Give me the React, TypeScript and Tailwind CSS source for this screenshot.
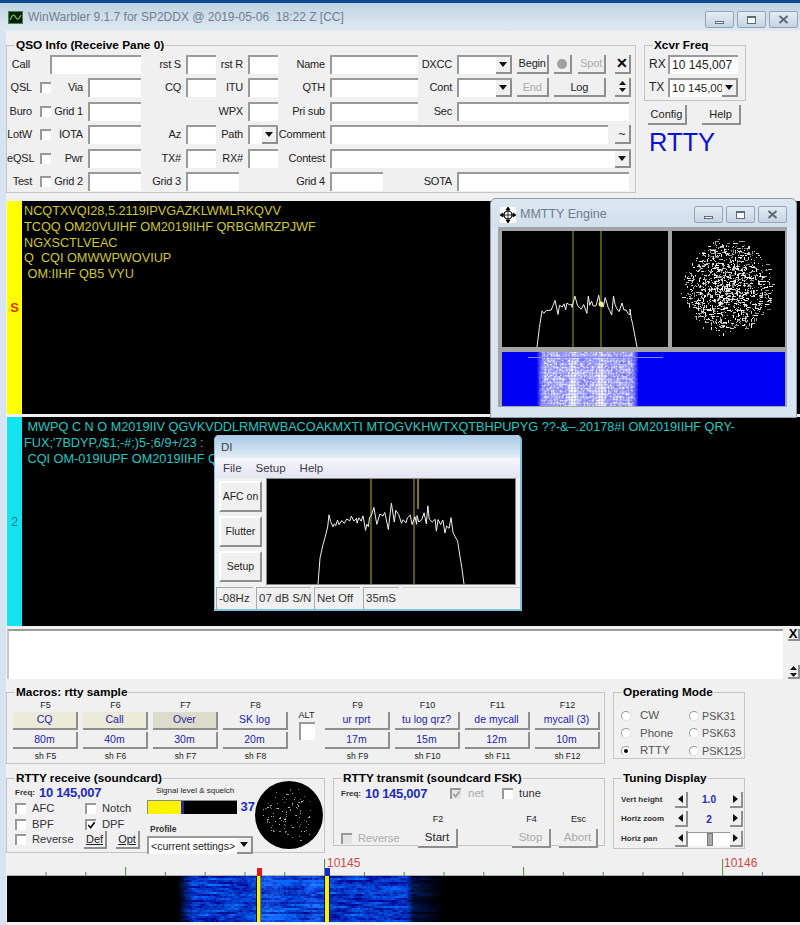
import React from "react";

// seeded random, so that the noise stays the same between runs
const makeRng = (seed: number) => () => {
  seed = (seed + 0x6d2b79f5) | 0;
  let t = Math.imul(seed ^ (seed >>> 15), 1 | seed);
  t = (t + Math.imul(t ^ (t >>> 7), 61 | t)) ^ t;
  return ((t ^ (t >>> 14)) >>> 0) / 4294967296;
};

const trace = (env: number[][], seed: number, noise: number) => {
  const r = makeRng(seed);
  const pts: string[] = [];
  let flip = 1;
  for (let i = 0; i < env.length - 1; i++) {
    const [x0, y0, n0] = env[i];
    const [x1, y1] = env[i + 1];
    let x = x0;
    while (x < x1) {
      const k = (x - x0) / (x1 - x0);
      if (r() > 0.3) flip = -flip;
      const y = y0 + (y1 - y0) * k + (n0 ?? 1) * noise * flip * r() * r() * 1.6;
      pts.push(`${x.toFixed(1)},${y.toFixed(1)}`);
      x += 1.2 + r() * 2;
    }
  }
  const last = env[env.length - 1];
  pts.push(`${last[0]},${last[1]}`);
  return pts.join(" ");
};

const Check = () => (
  <svg viewBox="0 0 10 10" className="w-full h-full">
    <path d="M1.5 4.5 L4 7.5 L8.5 1.5" fill="none" stroke="currentColor" strokeWidth="1.8" />
  </svg>
);

const Cb = ({ on, off }: { on?: boolean; off?: boolean }) => (
  <div
    className={`w-[11px] h-[11px] shrink-0 border-t-2 border-l-2 border-t-[#999] border-l-[#999] ${
      off ? "bg-[#e4e4e4] text-[#999]" : "bg-white text-black"
    }`}
  >
    {on && <Check />}
  </div>
);

const Radio = ({ on }: { on?: boolean }) => (
  <div className="w-[10px] h-[10px] rounded-full bg-white border border-[#9a9a9a] border-r-[#e4e4e4] border-b-[#e4e4e4] flex items-center justify-center">
    {on && <div className="w-[4px] h-[4px] rounded-full bg-black" />}
  </div>
);

const Inp = ({ className = "", children }: { className?: string; children?: React.ReactNode }) => (
  <div
    className={`h-[19px] bg-white border-t-2 border-l-2 border-t-[#9a9a9a] border-l-[#9a9a9a] text-[11.5px] leading-[16px] pl-[2px] whitespace-nowrap overflow-hidden ${className}`}
  >
    {children}
  </div>
);

const Btn = ({
  className = "",
  dim,
  children,
}: {
  className?: string;
  dim?: boolean;
  children?: React.ReactNode;
}) => (
  <div
    className={`flex items-center justify-center bg-[#f0f0f0] border-r-2 border-b-2 border-r-[#8e8e8e] border-b-[#8e8e8e] whitespace-nowrap ${
      dim ? "text-[#aaa]" : "text-[#222]"
    } ${className}`}
  >
    {children}
  </div>
);

const Down = () => (
  <svg viewBox="0 0 8 5" className="w-[8px] h-[5px]">
    <path d="M0 0 H8 L4 5 Z" fill="#111" />
  </svg>
);

const Combo = ({ className = "", children }: { className?: string; children?: React.ReactNode }) => (
  <div className={`relative ${className}`}>
    <Inp className="w-full h-full">{children}</Inp>
    <Btn className="absolute right-0 top-[2px] bottom-0 w-[16px]">
      <Down />
    </Btn>
  </div>
);

const Box = ({
  title,
  className = "",
  children,
}: {
  title: string;
  className?: string;
  children?: React.ReactNode;
}) => (
  <fieldset className={`border border-[#c4c4c4] shrink-0 ${className}`}>
    <legend className="ml-[8px] px-[1px] h-[14px] text-[11.8px] leading-[14px] font-bold text-black whitespace-nowrap">
      {title}
    </legend>
    {children}
  </fieldset>
);

const WinBtns = () => (
  <div className="flex gap-[3px] text-[#5b6b7b]">
    <div className="w-[29px] h-[17px] border border-[#93a5b8] rounded-[2px] bg-gradient-to-b from-[#e4ecf3] to-[#c6d4e1] flex items-end justify-center pb-[3px]">
      <div className="w-[9px] h-[3px] border border-[#5b6b7b] bg-white" />
    </div>
    <div className="w-[29px] h-[17px] border border-[#93a5b8] rounded-[2px] bg-gradient-to-b from-[#e4ecf3] to-[#c6d4e1] flex items-center justify-center">
      <div className="w-[9px] h-[8px] border border-[#5b6b7b] border-t-2 bg-white" />
    </div>
    <div className="w-[29px] h-[17px] border border-[#93a5b8] rounded-[2px] bg-gradient-to-b from-[#e4ecf3] to-[#c6d4e1] flex items-center justify-center">
      <svg viewBox="0 0 11 9" className="w-[11px] h-[9px]">
        <path d="M1.5 1 L9.5 8 M9.5 1 L1.5 8" stroke="#5b6b7b" strokeWidth="2" />
      </svg>
    </div>
  </div>
);

const Lbl = ({ className = "", children }: { className?: string; children?: React.ReactNode }) => (
  <div
    className={`text-right pr-[5px] text-[11px] tracking-[-0.2px] leading-[19px] text-[#222] whitespace-nowrap ${className}`}
  >
    {children}
  </div>
);

const CbCell = () => (
  <div className="h-[19px] flex items-center pl-[3px]">
    <Cb />
  </div>
);

function QsoInfo() {
  return (
    <Box title="QSO Info (Receive Pane 0)" className="w-[630px] h-[155px] mt-[7px]">
      <div className="pt-[3px] grid grid-cols-[30px_16px_35px_53px_45px_30px_32px_30px_52px_88px_39px_55px_119px] grid-rows-[repeat(6,19px)] gap-y-[4.4px]">
        {/* row 1 */}
        <Lbl className="pr-[7px]">Call</Lbl>
        <Inp className="col-span-3 ml-[13px]" />
        <Lbl>rst S</Lbl>
        <Inp />
        <Lbl>rst R</Lbl>
        <Inp />
        <Lbl>Name</Lbl>
        <Inp />
        <Lbl>DXCC</Lbl>
        <Combo />
        <div className="flex text-[11px] tracking-[-0.2px]">
          <Btn className="ml-[5px] w-[33px] h-[19px]">Begin</Btn>
          <Btn className="ml-[5px] w-[18px] h-[19px]">
            <div className="w-[10px] h-[10px] rounded-full bg-[#a0a0a0]" />
          </Btn>
          <Btn dim className="ml-[6px] w-[29px] h-[19px]">
            Spot
          </Btn>
          <Btn className="ml-[9px] w-[16px] h-[19px] text-[14px] font-bold !text-black">✕</Btn>
        </div>
        {/* row 2 */}
        <Lbl className="pr-[3px]">QSL</Lbl>
        <CbCell />
        <Lbl>Via</Lbl>
        <Inp />
        <Lbl>CQ</Lbl>
        <Inp />
        <Lbl>ITU</Lbl>
        <Inp />
        <Lbl>QTH</Lbl>
        <Inp />
        <Lbl>Cont</Lbl>
        <Combo />
        <div className="flex text-[11px] tracking-[-0.2px]">
          <Btn dim className="ml-[5px] w-[33px] h-[19px]">
            End
          </Btn>
          <Btn className="ml-[5px] w-[53px] h-[19px]">Log</Btn>
          <Btn className="ml-[9px] w-[16px] h-[19px]">
            <svg viewBox="0 0 7 11" className="w-[7px] h-[11px]">
              <path d="M3.5 0 L7 4 H0 Z M3.5 11 L0 7 H7 Z" fill="#111" />
            </svg>
          </Btn>
        </div>
        {/* row 3 */}
        <Lbl className="pr-[3px]">Buro</Lbl>
        <CbCell />
        <Lbl>Grid 1</Lbl>
        <Inp />
        <div className="col-span-2" />
        <Lbl>WPX</Lbl>
        <Inp />
        <Lbl>Pri sub</Lbl>
        <Inp />
        <Lbl>Sec</Lbl>
        <Inp className="col-span-2 mr-[2px]" />
        {/* row 4 */}
        <Lbl className="pr-[3px]">LotW</Lbl>
        <CbCell />
        <Lbl>IOTA</Lbl>
        <Inp />
        <Lbl>Az</Lbl>
        <Inp />
        <Lbl>Path</Lbl>
        <Combo />
        <Lbl>Comment</Lbl>
        <div className="col-span-4 flex">
          <Inp className="w-[278px]" />
          <Btn className="ml-[7px] w-[16px] h-[19px] text-[12px]">~</Btn>
        </div>
        {/* row 5 */}
        <Lbl className="pr-[3px]">eQSL</Lbl>
        <CbCell />
        <Lbl>Pwr</Lbl>
        <Inp />
        <Lbl>TX#</Lbl>
        <Inp />
        <Lbl>RX#</Lbl>
        <Inp />
        <Lbl>Contest</Lbl>
        <Combo className="col-span-4 w-[301px]" />
        {/* row 6 */}
        <Lbl className="pr-[3px]">Test</Lbl>
        <CbCell />
        <Lbl>Grid 2</Lbl>
        <Inp />
        <Lbl>Grid 3</Lbl>
        <Inp className="col-span-2 w-[53px]" />
        <div />
        <Lbl>Grid 4</Lbl>
        <Inp className="w-[53px]" />
        <Lbl>SOTA</Lbl>
        <Inp className="col-span-2 mr-[2px]" />
      </div>
    </Box>
  );
}

function XcvrColumn() {
  return (
    <div className="ml-[8px] w-[102px]">
      <Box title="Xcvr Freq" className="w-[102px] h-[63px] mt-[7px]">
        <div className="pt-[3px] pl-[4px] grid grid-cols-[19px_70px] gap-y-[4px] text-[12px] text-[#222]">
          <div className="leading-[19px]">RX</div>
          <Inp className="text-[12px]">10 145,007</Inp>
          <div className="leading-[19px]">TX</div>
          <Combo className="h-[19px]">10 145,007</Combo>
        </div>
      </Box>
      <div className="mt-[4px] ml-[4px] flex gap-[15px] text-[11px]">
        <Btn className="w-[39px] h-[20px]">Config</Btn>
        <Btn className="w-[39px] h-[20px]">Help</Btn>
      </div>
      <div className="ml-[5px] mt-[3px] text-[25.5px] leading-[28px] text-[#0c12d0]">RTTY</div>
    </div>
  );
}

const SPANE = [
  "NCQTXVQI28,5.2119IPVGAZKLWMLRKQVV",
  "TCQQ OM20VUIHF OM2019IIHF QRBGMRZPJWF",
  "NGXSCTLVEAC",
  "Q  CQI OMWWPWOVIUP",
  " OM:IIHF QB5 VYU",
];
const RPANE = [
  " MWPQ C N O M2019IIV QGVKVDDLRMRWBACOAKMXTI MTOGVKHWTXQTBHPUPYG ??-&–.20178#I OM2019IIHF QRY-",
  "FUX;'7BDYP,/$1;-#;)5-;6/9+/23 :",
  " CQI OM-019IUPF OM2019IIHF Q'",
];

const Pane = ({
  lines,
  mark,
  stripe,
  markCls,
  text,
  className,
}: {
  lines: string[];
  mark: string;
  stripe: string;
  markCls: string;
  text: string;
  className: string;
}) => (
  <div className={`ml-px flex bg-black ${className}`}>
    <div className={`w-[15px] flex items-center justify-center ${stripe}`}>
      <span className={`text-[13px] font-bold ${markCls}`}>{mark}</span>
    </div>
    <div className={`pl-[2px] pt-[3px] text-[12.7px] leading-[15.8px] whitespace-pre ${text}`}>
      {lines.map((l, i) => (
        <div key={i}>{l}</div>
      ))}
    </div>
  </div>
);

function Constellation({ w, h, cx, cy, rx, ry, n, color, seed, len }: any) {
  const r = makeRng(seed);
  const dots = [];
  for (let i = 0; i < n; i++) {
    const a = r() * Math.PI * 2;
    const d = Math.pow(r(), 0.6) * (0.82 + r() * 0.26);
    const x = Math.round(cx + Math.cos(a) * d * rx);
    const y = Math.round(cy + Math.sin(a) * d * ry);
    const l = r() < 0.55 ? 1 : Math.round(len * (0.5 + r()));
    const tall = r() < 0.35;
    dots.push(
      <rect
        key={i}
        x={x}
        y={y}
        width={tall ? 1 : l}
        height={tall ? l : 1}
        fill={color}
        opacity={0.45 + r() * 0.55}
      />
    );
  }
  return (
    <svg width={w} height={h} className="block">
      {dots}
    </svg>
  );
}

function MmttyWaterfall() {
  const r = makeRng(11);
  const cells = [];
  for (let y = 0; y < 54; y += 1.5) {
    for (let x = 34; x < 136; x += 1.5) {
      const edge = Math.min(1, Math.max(0, Math.min(x - 34, 136 - x)) / 7);
      const low = 0.35 + (y / 54) * 0.65;
      const hot =
        (Math.max(0, 1 - Math.abs(x - 70) / 6) + Math.max(0, 1 - Math.abs(x - 98) / 6)) * low * 0.5;
      const o = Math.min(1, (0.45 + r() * 0.5 + hot) * edge);
      cells.push(<rect key={`${x}-${y}`} x={x} y={y} width={1.6} height={1.6} fill="#fff" opacity={o} />);
    }
  }
  return (
    <svg width={283} height={54} className="block bg-[#0000f4]">
      {cells}
      <rect x={26} y={5} width={135} height={1} fill="#8088ff" />
    </svg>
  );
}

function MmttyEngine() {
  return (
    <div className="absolute left-[490px] top-[198px] w-[307px] h-[220px] bg-[#d8e5f1] rounded-t-[6px] border border-[#8e9cab] px-[7px]">
      <div className="h-[28px] pt-[3px] flex items-center bg-gradient-to-b from-[#dce7f1] to-[#d2e0ed] -mx-[7px] px-[9px] rounded-t-[6px]">
        <svg viewBox="0 0 16 16" className="w-[16px] h-[16px] bg-white shrink-0">
          <circle cx="8" cy="8" r="4" fill="none" stroke="#000" strokeWidth="1.2" />
          <path
            d="M8 1 V15 M1 8 H15 M8 0 L6 3 H10 Z M8 16 L6 13 H10 Z M0 8 L3 6 V10 Z M16 8 L13 6 V10 Z"
            stroke="#000"
            fill="#000"
            strokeWidth="0.8"
          />
        </svg>
        <span className="ml-[4px] text-[12.5px] text-[#6d7d8c]">MMTTY Engine</span>
        <div className="ml-auto">
          <WinBtns />
        </div>
      </div>
      <div className="bg-[#a4a4a4] pl-[4px] pr-[2px] pt-[4px] h-[180px] w-[289px] flex flex-col gap-[5px]">
        <div className="flex gap-[4px] h-[116px] shrink-0">
          <div className="w-[166px] bg-black">
            <svg width={166} height={116} className="block">
              <line x1={71} y1={0} x2={71} y2={116} stroke="#a4a422" />
              <line x1={99} y1={0} x2={99} y2={116} stroke="#a4a422" />
              <polyline
                fill="none"
                stroke="#f0f0f0"
                strokeWidth={1}
                points={trace(
                  [
                    [35, 116, 0],
                    [38, 92, 0.2],
                    [40, 80, 0.8],
                    [70, 74, 1],
                    [95, 74, 1],
                    [128, 80, 0.6],
                    [131, 95, 0],
                    [135, 116, 0],
                  ],
                  5,
                  10
                )}
              />
              <circle cx={99} cy={73} r={2.5} fill="#f0f08a" />
            </svg>
          </div>
          <div className="w-[113px] bg-black">
            <Constellation w={113} h={116} cx={55} cy={56} rx={44} ry={46} n={1300} color="#fff" seed={3} len={3} />
          </div>
        </div>
        <MmttyWaterfall />
      </div>
    </div>
  );
}

function DiWindow() {
  const r = ["-08Hz", "07 dB S/N", "Net Off", "35mS"];
  const w = ["w-[37px]", "w-[55px]", "w-[46px]", "w-[36px]"];
  return (
    <div className="absolute left-[214px] top-[435px] w-[308px] h-[176px] bg-[#f0f0f0] rounded-t-[5px] border-r-2 border-b-2 border-l border-[#7fc4d8] flex flex-col text-[11.5px] text-[#333]">
      <div className="h-[23px] shrink-0 pl-[6px] leading-[24px] rounded-t-[5px] bg-gradient-to-b from-[#a9c9e6] to-[#e2ecf5] text-[#444]">
        DI
      </div>
      <div className="h-[20px] shrink-0 flex gap-[14px] pl-[8px] leading-[20px] bg-gradient-to-b from-[#f6f6fb] to-[#e4e4f2] text-[#3a3a4a]">
        <span>File</span>
        <span>Setup</span>
        <span>Help</span>
      </div>
      <div className="flex h-[107px] shrink-0 pl-[4px]">
        <div className="w-[43px] pt-[3px] flex flex-col gap-[4px] text-[10.5px]">
          <Btn className="h-[31px] border-t-2 border-l-2 border-t-white border-l-white">AFC on</Btn>
          <Btn className="h-[31px] border-t-2 border-l-2 border-t-white border-l-white">Flutter</Btn>
          <Btn className="h-[31px] border-t-2 border-l-2 border-t-white border-l-white">Setup</Btn>
        </div>
        <div className="ml-[4px] w-[250px] bg-black border border-[#888]">
          <svg width={248} height={105} className="block">
            <line x1={104} y1={0} x2={104} y2={105} stroke="#b4b42a" />
            <line x1={147} y1={0} x2={147} y2={105} stroke="#b4b42a" />
            <line x1={151} y1={0} x2={151} y2={30} stroke="#a8a420" strokeWidth={1.5} />
            <polyline
              fill="none"
              stroke="#f0f0f0"
              strokeWidth={1}
              points={trace(
                [
                  [51, 105, 0],
                  [53, 80, 0.3],
                  [58, 60, 0.3],
                  [62, 40, 0.6],
                  [66, 46, 0.4],
                  [90, 40, 0.9],
                  [120, 36, 1],
                  [150, 38, 1],
                  [178, 46, 0.7],
                  [186, 52, 0.2],
                  [191, 65, 0.1],
                  [195, 90, 0],
                  [197, 105, 0],
                ],
                9,
                11
              )}
            />
          </svg>
        </div>
      </div>
      <div className="flex flex-1 items-stretch pl-[1px] pt-[2px] gap-[3px]">
        {r.map((t, i) => (
          <div key={t} className={`${w[i]} border-t border-l border-[#aaa] leading-[20px] pl-[2px] whitespace-nowrap`}>
            {t}
          </div>
        ))}
        <div className="flex-1 border-t border-[#ccc]" />
      </div>
    </div>
  );
}

const FKeys = [
  { f: "F5", top: "CQ", bot: "80m", sh: "sh F5", bg: "!bg-[#ecead8]" },
  { f: "F6", top: "Call", bot: "40m", sh: "sh F6", bg: "!bg-[#ecead8]" },
  { f: "F7", top: "Over", bot: "30m", sh: "sh F7", bg: "!bg-[#dddccb]" },
  { f: "F8", top: "SK log", bot: "20m", sh: "sh F8", bg: "" },
  { f: "F9", top: "ur rprt", bot: "17m", sh: "sh F9", bg: "" },
  { f: "F10", top: "tu log qrz?", bot: "15m", sh: "sh F10", bg: "" },
  { f: "F11", top: "de mycall", bot: "12m", sh: "sh F11", bg: "" },
  { f: "F12", top: "mycall (3)", bot: "10m", sh: "sh F12", bg: "" },
];

const MacroCol = ({ k }: { k: (typeof FKeys)[number] }) => (
  <div className="w-[65px] flex flex-col items-stretch">
    <div className="h-[13px] text-center text-[9px] leading-[13px] text-[#222]">{k.f}</div>
    <Btn className={`h-[18px] text-[10.5px] !text-[#1c1cb0] ${k.bg}`}>{k.top}</Btn>
    <Btn className="mt-[2px] h-[17px] text-[10.5px] !text-[#1c1cb0]">{k.bot}</Btn>
    <div className="mt-[1px] h-[12px] text-center text-[8.5px] leading-[12px] text-[#222]">{k.sh}</div>
  </div>
);

function Macros() {
  return (
    <Box title="Macros: rtty sample" className="w-[599px] h-[79px]">
      <div className="flex gap-[5px] pl-[6px]">
        {FKeys.slice(0, 4).map((k) => (
          <MacroCol key={k.f} k={k} />
        ))}
        <div className="w-[27px] flex flex-col items-center pt-[11px]">
          <div className="text-[9px] leading-[11px] text-[#222]">ALT</div>
          <div className="mt-[1px] w-[16px] h-[18px] bg-white border-t-2 border-l-2 border-t-[#999] border-l-[#999]" />
        </div>
        {FKeys.slice(4).map((k) => (
          <MacroCol key={k.f} k={k} />
        ))}
      </div>
    </Box>
  );
}

function OpMode() {
  const modes = [
    ["CW", "PSK31"],
    ["Phone", "PSK63"],
    ["RTTY", "PSK125"],
  ];
  return (
    <Box title="Operating Mode" className="w-[132px] h-[74px]">
      <div className="pl-[7px] pt-[8px] grid grid-cols-[68px_1fr] auto-rows-[17.5px] text-[11.5px] text-[#555]">
        {modes.flat().map((m) => (
          <div key={m} className="flex items-center">
            <Radio on={m === "RTTY"} />
            <span className={m.startsWith("PSK") ? "ml-[3px] text-[10.8px]" : "ml-[9px]"}>{m}</span>
          </div>
        ))}
      </div>
    </Box>
  );
}

const FreqRow = () => (
  <div className="h-[15px] flex items-center">
    <span className="text-[8px] font-bold text-[#333]">Freq:</span>
    <span className="ml-[4px] text-[13px] font-bold tracking-[-0.3px] text-[#1c2cb8]">10 145,007</span>
  </div>
);

const CheckLbl = ({ label, on }: { label: string; on?: boolean }) => (
  <div className="flex items-center text-[11.2px] text-[#333]">
    <Cb on={on} />
    <span className="ml-[6px]">{label}</span>
  </div>
);

function RttyReceive() {
  return (
    <Box title="RTTY receive (soundcard)" className="w-[319px] h-[82px]">
      <div className="flex pl-[8px]">
        <div className="w-[132px]">
          <FreqRow />
          <div className="mt-[1px] grid grid-cols-[70px_1fr] auto-rows-[15.5px] items-center">
            <CheckLbl label="AFC" />
            <CheckLbl label="Notch" />
            <CheckLbl label="BPF" />
            <CheckLbl label="DPF" on />
            <CheckLbl label="Reverse" />
            <div className="-ml-px flex gap-[9px] text-[11px] h-[18px]">
              <Btn className="w-[23px] h-[18px] underline">Def</Btn>
              <Btn className="w-[24px] h-[18px] underline">Opt</Btn>
            </div>
          </div>
        </div>
        <div className="w-[108px] relative z-10">
          <div className="pl-[9px] h-[12px] text-[8px] leading-[11px] text-[#222] whitespace-nowrap">
            Signal level &amp; squelch
          </div>
          <div className="flex items-center">
            <div className="w-[91px] h-[14px] flex bg-black border-t border-l border-[#8a8a8a]">
              <div className="w-[33px] bg-[#fff200]" />
              <div className="w-[3px] bg-[#1c2cb8]" />
            </div>
            <span className="ml-[4px] text-[13px] font-bold text-[#1c2cb8]">37</span>
          </div>
          <div className="mt-[6px] pl-[3px] h-[12px] text-[8.5px] font-bold leading-[12px] text-[#333]">Profile</div>
          <Combo className="mt-[1px] w-[106px] h-[18px]">
            <span className="text-[#222] text-[10.5px]">&lt;current settings&gt;</span>
          </Combo>
        </div>
        <div className="-mt-[4px] shrink-0 w-[68px] h-[68px] rounded-full bg-black overflow-hidden">
          <Constellation w={68} h={68} cx={34} cy={34} rx={28} ry={28} n={110} color="#c8c8c8" seed={21} len={1.2} />
        </div>
      </div>
    </Box>
  );
}

function RttyTransmit() {
  return (
    <Box title="RTTY transmit (soundcard FSK)" className="w-[272px] h-[75px] ml-[8px]">
      <div className="pl-[7px]">
        <div className="flex items-center">
          <FreqRow />
          <div className="ml-[23px]">
            <div className="flex items-center text-[11.5px] text-[#aaa]">
              <Cb on off />
              <span className="ml-[7px]">net</span>
            </div>
          </div>
          <div className="ml-[18px]">
            <CheckLbl label="tune" />
          </div>
        </div>
        <div className="mt-[11px] grid grid-cols-[77px_40px_54px_39px_8px_39px] items-center">
          <div />
          <div className="text-center text-[9px] leading-[12px] text-[#222]">F2</div>
          <div />
          <div className="text-center text-[9px] leading-[12px] text-[#222]">F4</div>
          <div />
          <div className="text-center text-[9px] leading-[12px] text-[#222]">Esc</div>
          <div className="mt-[4px] flex items-center text-[11.2px] text-[#aaa]">
            <Cb off />
            <span className="ml-[6px]">Reverse</span>
          </div>
          <Btn className="mt-[4px] h-[19px] text-[11.5px]">Start</Btn>
          <div />
          <Btn dim className="mt-[4px] h-[19px] text-[11.5px]">
            Stop
          </Btn>
          <div />
          <Btn dim className="mt-[4px] h-[19px] text-[11.5px]">
            Abort
          </Btn>
        </div>
      </div>
    </Box>
  );
}

const Arrow = ({ right }: { right?: boolean }) => (
  <Btn className="w-[13px] h-[16px]">
    <svg viewBox="0 0 5 8" className="w-[5px] h-[8px]">
      <path d={right ? "M0 0 L5 4 L0 8 Z" : "M5 0 L0 4 L5 8 Z"} fill="#111" />
    </svg>
  </Btn>
);

function Tuning() {
  return (
    <Box title="Tuning Display" className="w-[132px] h-[78px]">
      <div className="pl-[7px] pt-[5px] grid grid-cols-[54px_13px_42px_13px] auto-rows-[19.5px] items-center text-[8px] font-bold text-[#333]">
        <div>Vert height</div>
        <Arrow />
        <div className="text-center text-[10px] text-[#1c2cb8]">1.0</div>
        <Arrow right />
        <div>Horiz zoom</div>
        <Arrow />
        <div className="text-center text-[10px] text-[#1c2cb8]">2</div>
        <Arrow right />
        <div>Horiz pan</div>
        <Arrow />
        <div className="h-[14px] bg-white border-t border-[#999] flex items-stretch pl-[19px]">
          <div className="w-[6px] bg-[#aaa] border border-[#777]" />
        </div>
        <Arrow right />
      </div>
    </Box>
  );
}

function Ruler() {
  const ticks = [];
  for (let i = 0; i < 20; i++) {
    const x = 39 + i * 39.8;
    const big = i === 7 || i === 17;
    const mid = i === 2 || i === 12;
    ticks.push(
      <line key={i} x1={x} x2={x} y1={big ? 4 : mid ? 12 : 17} y2={21} stroke="#4d8a4d" strokeWidth={1} />
    );
  }
  return (
    <svg width={793} height={21} className="block ml-px">
      <line x1={0} x2={793} y1={20.5} y2={20.5} stroke="#b0b0b0" />
      {ticks}
      <rect x={250} y={13} width={5} height={8} fill="#e01818" />
      <rect x={318} y={13} width={5} height={8} fill="#1828d0" />
      <text x={320} y={12} fontSize={12} fill="#d04848">
        10145
      </text>
      <text x={717} y={12} fontSize={12} fill="#d04848">
        10146
      </text>
    </svg>
  );
}

function Waterfall() {
  const r = makeRng(77);
  const cells = [];
  for (let y = 0; y < 46; y += 2) {
    const row = 0.75 + r() * 0.4;
    let w = r();
    for (let x = 165; x < 436; x += 2) {
      w = 0.8 * w + 0.2 * r();
      const inBand = Math.min(1, Math.max(0, x - 170) / 16) * Math.min(1, Math.max(0, 408 - x) / 10);
      const tail = x > 400 ? (Math.max(0, (436 - x) / 36) * 0.45 * (row - 0.6)) / 0.5 : 0;
      const hot =
        Math.max(0, 1 - Math.abs(x - 262) / 22) * 0.7 + Math.max(0, 1 - Math.abs(x - 306) / 20) * 0.6;
      const v = Math.max(inBand * row, tail);
      const n = Math.max(0, Math.min(1, (w - 0.32) * 2.6 + hot * 0.45));
      const R = Math.round((4 + hot * 36 * n) * v);
      const G = Math.round((8 + 105 * n) * v);
      const B = Math.round((150 + 105 * n) * Math.min(1, v * 1.15));
      cells.push(<rect key={`${x}-${y}`} x={x} y={y} width={2.4} height={2.4} fill={`rgb(${R},${G},${B})`} />);
    }
  }
  return (
    <div className="ml-px h-[46px] bg-black overflow-hidden">
      <svg width={793} height={46} className="block">
        <g className="blur-[0.5px]">{cells}</g>
        <rect x={249} y={0} width={5} height={46} fill="#161606" />
        <rect x={250} y={0} width={3.5} height={46} fill="#f2ee20" />
        <rect x={317} y={0} width={6} height={46} fill="#161606" />
        <rect x={318} y={0} width={4} height={46} fill="#f2ee20" />
      </svg>
    </div>
  );
}

export default function App() {
  return (
    <div className="relative w-[800px] h-[925px] overflow-hidden bg-[#f0f0f0] font-['Liberation_Sans',Arial,sans-serif]">
      {/* title bar */}
      <div className="h-[31px] border-t-[3px] border-t-[#104c92] bg-gradient-to-b from-[#bfd2e3] to-[#e0e9f1] flex items-center pl-[8px] pr-[2px]">
        <svg viewBox="0 0 15 13" className="w-[15px] h-[13px] shrink-0">
          <rect x="0.5" y="0.5" width="14" height="12" fill="#0c1a0c" stroke="#3c8a3c" />
          <path d="M2 9 Q5 1 7.5 6 T13 4" fill="none" stroke="#5fd05f" strokeWidth="1.2" />
        </svg>
        <span className="ml-[5px] text-[12px] text-[#6f7f8e] whitespace-pre">
          WinWarbler 9.1.7 for SP2DDX @ 2019-05-06  18:22 Z [CC]
        </span>
        <div className="ml-auto mt-[5px]">
          <WinBtns />
        </div>
      </div>

      <div className="flex">
        <div className="w-[6px] h-[894px] shrink-0 bg-[#d6e4f2]" />
        <div className="w-[794px]">
          <div className="flex h-[170px]">
            <QsoInfo />
            <XcvrColumn />
          </div>
          <Pane
            lines={SPANE}
            mark="S"
            stripe="bg-[#ffff00]"
            markCls="text-[#e03010]"
            text="text-[#cfc92c]"
            className="h-[213px]"
          />
          <Pane
            lines={RPANE}
            mark="2"
            stripe="bg-[#14e4f0]"
            markCls="text-[#1f7f90] !font-normal"
            text="text-[#22c8c4]"
            className="h-[209px] mt-[3px]"
          />
          {/* transmit pane */}
          <div className="ml-px mt-[3px] h-[50px] flex">
            <div className="flex-1 bg-white border-t-2 border-l-2 border-t-[#9a9a9a] border-l-[#c8c8c8]" />
            <div className="w-[17px] flex flex-col justify-between items-end">
              <Btn className="w-[12px] h-[12px] text-[13px] font-bold !text-black">X</Btn>
              <Btn className="w-[12px] h-[14px]">
                <svg viewBox="0 0 7 11" className="w-[7px] h-[11px]">
                  <path d="M3.5 0 L7 4 H0 Z M3.5 11 L0 7 H7 Z" fill="#111" />
                </svg>
              </Btn>
            </div>
          </div>
          <div className="flex mt-[6px]">
            <Macros />
            <div className="ml-[8px]">
              <OpMode />
            </div>
          </div>
          <div className="flex mt-[7px] h-[84px]">
            <RttyReceive />
            <RttyTransmit />
            <div className="ml-[8px]">
              <Tuning />
            </div>
          </div>
          <Ruler />
          <Waterfall />
        </div>
      </div>

      <MmttyEngine />
      <DiWindow />
    </div>
  );
}
